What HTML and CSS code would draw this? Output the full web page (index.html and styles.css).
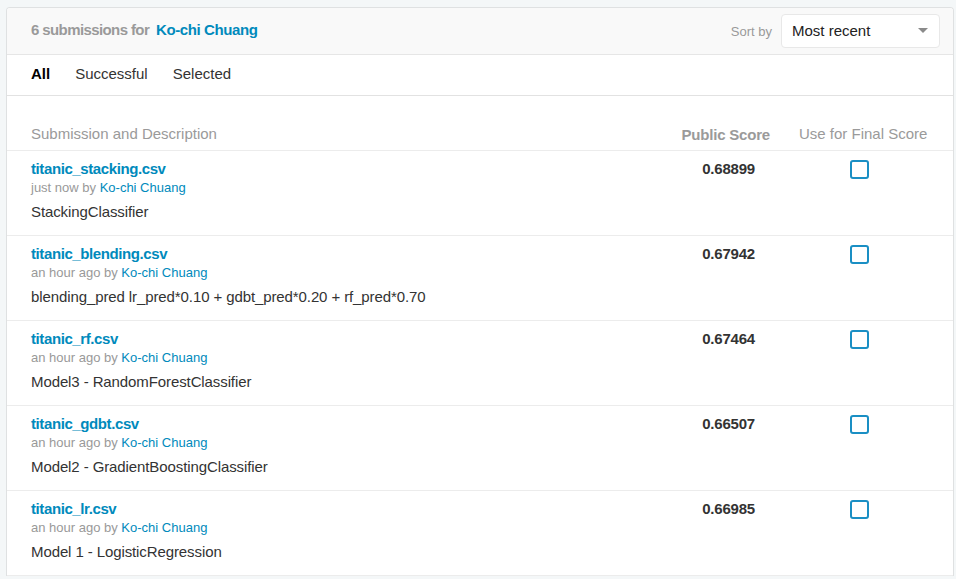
FILE: index.html
```html
<!DOCTYPE html>
<html lang="en">
<head>
<meta charset="utf-8">
<title>Submissions</title>
<link rel="stylesheet" href="styles.css">
</head>
<body>
<div class="page">
  <div class="card">
    <div class="card-header">
      <div class="title"><span class="count">6 submissions for</span> <a class="user-link" href="#">Ko-chi Chuang</a></div>
      <div class="sort">
        <span class="sort-label">Sort by</span>
        <div class="select"><span>Most recent</span><span class="caret"></span></div>
      </div>
    </div>
    <div class="tabs">
      <span class="tab active">All</span>
      <span class="tab">Successful</span>
      <span class="tab">Selected</span>
    </div>
    <div class="table">
      <div class="row head">
        <div class="c-desc">Submission and Description</div>
        <div class="c-score">Public Score</div>
        <div class="c-final">Use for Final Score</div>
      </div>
      <div class="row">
        <div class="c-desc">
          <a class="file" href="#">titanic_stacking.csv</a>
          <div class="meta">just now by <a href="#">Ko-chi Chuang</a></div>
          <div class="desc">StackingClassifier</div>
        </div>
        <div class="c-score">0.68899</div>
        <div class="c-final"><span class="check"></span></div>
      </div>
      <div class="row">
        <div class="c-desc">
          <a class="file" href="#">titanic_blending.csv</a>
          <div class="meta">an hour ago by <a href="#">Ko-chi Chuang</a></div>
          <div class="desc">blending_pred lr_pred*0.10 + gdbt_pred*0.20 + rf_pred*0.70</div>
        </div>
        <div class="c-score">0.67942</div>
        <div class="c-final"><span class="check"></span></div>
      </div>
      <div class="row">
        <div class="c-desc">
          <a class="file" href="#">titanic_rf.csv</a>
          <div class="meta">an hour ago by <a href="#">Ko-chi Chuang</a></div>
          <div class="desc">Model3 - RandomForestClassifier</div>
        </div>
        <div class="c-score">0.67464</div>
        <div class="c-final"><span class="check"></span></div>
      </div>
      <div class="row">
        <div class="c-desc">
          <a class="file" href="#">titanic_gdbt.csv</a>
          <div class="meta">an hour ago by <a href="#">Ko-chi Chuang</a></div>
          <div class="desc">Model2 - GradientBoostingClassifier</div>
        </div>
        <div class="c-score">0.66507</div>
        <div class="c-final"><span class="check"></span></div>
      </div>
      <div class="row">
        <div class="c-desc">
          <a class="file" href="#">titanic_lr.csv</a>
          <div class="meta">an hour ago by <a href="#">Ko-chi Chuang</a></div>
          <div class="desc">Model 1 - LogisticRegression</div>
        </div>
        <div class="c-score">0.66985</div>
        <div class="c-final"><span class="check"></span></div>
      </div>
    </div>
  </div>
</div>
</body>
</html>
```
FILE: styles.css
```css
* { box-sizing: border-box; }
html, body { margin: 0; padding: 0; }
body {
  background: #f4f7f8;
  font-family: "Liberation Sans", Arial, sans-serif;
  color: #333;
  height: 579px;
  overflow: hidden;
}
a { color: #008abc; text-decoration: none; }
.page { padding: 7px 2px 0 6px; }
.card {
  background: #fff;
  border: 1px solid #dfe1e2;
  border-bottom: none;
  border-radius: 4px 4px 0 0;
  overflow: hidden;
}
.card-header {
  height: 47px;
  background: #f9f9f9;
  border-bottom: 1px solid #e6e6e6;
  display: flex;
  align-items: center;
  justify-content: space-between;
  padding: 0 13px 0 24px;
}
.title { font-size: 15px; font-weight: bold; letter-spacing: -0.4px; margin-top: -3px; }
.count { color: #9a9a9a; letter-spacing: -0.6px; }
.user-link { margin-left: 3px; }
.sort { display: flex; align-items: center; gap: 9px; }
.sort-label { font-size: 13px; color: #999; }
.select {
  width: 159px;
  height: 34px;
  background: #fff;
  border: 1px solid #e8e8e8;
  border-radius: 4px;
  display: flex;
  align-items: center;
  justify-content: space-between;
  padding: 0 11px 2px 10px;
  font-size: 15px;
  color: #222;
}
.caret {
  width: 0; height: 0;
  border-left: 5px solid transparent;
  border-right: 5px solid transparent;
  border-top: 5px solid #8a8a8a;
}
.tabs {
  height: 41px;
  border-bottom: 1px solid #e2e2e2;
  display: flex;
  align-items: center;
  padding: 0 0 3px 24px;
  gap: 25px;
  font-size: 15px;
}
.tab { color: #333; }
.tab.active { color: #000; font-weight: bold; }
.row {
  display: grid;
  grid-template-columns: 1fr 111px 183px;
  border-bottom: 1px solid #ececec;
  height: 85px;
  padding: 8px 0 0 24px;
}
.row.head {
  height: 55px;
  padding-top: 29px;
  font-size: 15px;
  color: #9a9a9a;
}
.row.head .c-score { font-weight: bold; text-align: right; padding-right: 0; color: #9a9a9a; }
.row.head .c-final { padding-left: 29px; }
.file { display: block; font-size: 15px; font-weight: bold; line-height: 20px; letter-spacing: -0.4px; }
.meta { font-size: 13px; color: #999; line-height: 16px; margin-top: 1px; }
.desc { font-size: 15px; color: #333; line-height: 20px; margin-top: 6px; letter-spacing: -0.1px; }
.c-score {
  text-align: right;
  font-size: 15px;
  font-weight: bold;
  line-height: 20px;
  padding-right: 15px;
  letter-spacing: -0.2px;
}
.row:not(.head) .c-score { color: #333; }
.check {
  display: block;
  width: 19px;
  height: 19px;
  border: 2px solid #1a8fc4;
  border-radius: 3px;
  margin: 1px 0 0 80px;
}
```
